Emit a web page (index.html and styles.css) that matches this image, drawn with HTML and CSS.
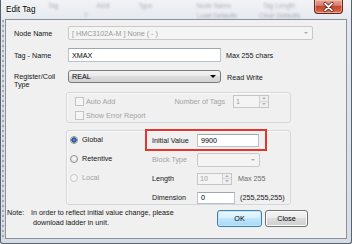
FILE: index.html
```html
<!DOCTYPE html>
<html>
<head>
<meta charset="utf-8">
<title>Edit Tag</title>
<link rel="stylesheet" href="styles.css">
</head>
<body>
<div class="window">
  <div class="backdrop">
    <div class="bd-row">
      <span class="bd b1">Tag</span><span class="bd b2">Addr</span><span class="bd b3">Type</span><span class="bd b4">Node Name</span><span class="bd b5">Tag Length</span>
    </div>
    <div class="bd-row">
      <span class="bd b6">T</span><span class="bd b7">Load Defaults</span><span class="bd b8">Clear Defaults</span>
    </div>
  </div>
  <div class="titlebar">
    <span class="title">Edit Tag</span>
    <div class="close-btn">
      <svg width="28" height="14" viewBox="0 0 28 14">
        <path d="M10.5 3.5 L17.5 10.5 M17.5 3.5 L10.5 10.5" stroke="#5a1d14" stroke-width="3.6" stroke-linecap="round" fill="none"/>
        <path d="M10.5 3.5 L17.5 10.5 M17.5 3.5 L10.5 10.5" stroke="#ffffff" stroke-width="2" stroke-linecap="round" fill="none"/>
      </svg>
    </div>
  </div>
  <div class="client">
    <div class="form">
      <div class="lbl">Node Name</div>
      <div class="combo disabled node"><span class="ctext">[ HMC3102A-M ] None ( - )</span><span class="arrow small gray"></span></div>
      <div class="lbl">Tag - Name</div>
      <div class="ctl-row"><div class="textbox tagname">XMAX</div><span class="side">Max 255 chars</span></div>
      <div class="lbl two">Register/Coil<br>Type</div>
      <div class="ctl-row top"><div class="combo list regtype"><span class="ctext">REAL</span><span class="arrow"></span></div><span class="side rw">Read Write</span></div>
    </div>

    <div class="group g1">
      <div class="g1-row">
        <span class="chk"></span><span class="dis">Auto Add</span>
        <span class="dis numtags">Number of Tags</span>
        <div class="spin ntags"><span class="spin-text">1</span><span class="spin-btns"><span class="sb up"></span><span class="sb down"></span></span></div>
      </div>
      <div class="g1-row">
        <span class="chk"></span><span class="dis">Show Error Report</span>
      </div>
    </div>

    <div class="group g2">
      <div class="radios">
        <div class="r-row"><span class="radio on"></span><span>Global</span></div>
        <div class="r-row"><span class="radio"></span><span>Retentive</span></div>
        <div class="r-row"><span class="radio off"></span><span class="dis">Local</span></div>
      </div>
      <div class="fields">
        <div class="f-row ivrow"><span class="flbl">Initial Value</span><div class="textbox iv">9900</div></div>
        <div class="f-row"><span class="flbl dis">Block Type</span><div class="combo disabled btype"><span class="ctext"></span><span class="arrow small gray"></span></div></div>
        <div class="f-row"><span class="flbl">Length</span><div class="spin len"><span class="spin-text">10</span><span class="spin-btns"><span class="sb up"></span><span class="sb down"></span></span></div><span class="side gray">Max 255</span></div>
        <div class="f-row"><span class="flbl">Dimension</span><div class="textbox dim">0</div><span class="side">(255,255,255)</span></div>
      </div>
    </div>

    <div class="bottom">
      <div class="note">
        <span class="note-h">Note:</span>
        <div class="note-t"><div>In order to reflect initial value change, please</div><div class="l2">download ladder in unit.</div></div>
      </div>
      <div class="buttons">
        <div class="btn default">OK</div>
        <div class="btn">Close</div>
      </div>
    </div>
  </div>
</div>
</body>
</html>
```
FILE: styles.css
```css
* { box-sizing: border-box; }
html, body { margin: 0; padding: 0; }
body {
  width: 352px;
  height: 244px;
  overflow: hidden;
  background: #d9dee4;
  font-family: "Liberation Sans", Arial, sans-serif;
  font-size: 7.2px;
  color: #141414;
}

.window {
  position: relative;
  width: 352px;
  height: 244px;
  background:
    repeating-linear-gradient(to bottom, #a3a9b1 0 2px, #d6dbe1 2px 5px) 1px 20px / 2px 220px no-repeat,
    linear-gradient(#f1f3f6, #e4e8ed 22px, #d8dde3);
  border: 1px solid #59636f;
  border-top: none;
  border-radius: 0 0 3px 3px;
  padding: 0 5px 5px 5px;
  display: flex;
  flex-direction: column;
}

/* blurred glass backdrop */
.backdrop {
  position: absolute;
  top: 0;
  left: 0;
  right: 0;
  height: 20px;
}
.bd-row { display: flex; height: 10px; align-items: center; }
.bd {
  display: block;
  white-space: nowrap;
  font-size: 6.5px;
  color: #5d636b;
  opacity: 0.45;
  filter: blur(1.3px);
}
.b1 { margin-left: 47px; }
.b2 { margin-left: 38px; }
.b3 { margin-left: 28px; }
.b4 { margin-left: 44px; }
.b5 { margin-left: 32px; }
.b6 { margin-left: 83px; }
.b7 { margin-left: 109px; }
.b8 { margin-left: 22px; }

.titlebar {
  position: relative;
  height: 20px;
  margin: 0 -5px;
  padding-left: 5px;
  display: flex;
  align-items: flex-start;
  justify-content: space-between;
}
.title {
  margin-top: 5px;
  font-size: 8.2px;
  color: #000;
  text-shadow: 0 0 3px #fff, 0 0 2px #fff;
}
.close-btn {
  width: 29px;
  height: 14px;
  margin-right: 8px;
  border: 1px solid #6b2418;
  border-top: none;
  border-radius: 0 0 4px 4px;
  background: linear-gradient(#e7a394 0%, #d9826f 40%, #c6472f 50%, #cf5b43 80%, #de8a6c 100%);
  box-shadow: inset 0 0 0 1px rgba(255,220,210,0.45);
  display: flex;
  align-items: center;
  justify-content: center;
}
.close-btn svg { display: block; }

.client {
  position: relative;
  flex: 1;
  background: #f0f0f0;
  box-shadow: 0 0 0 1px #8791a0;
}

/* top form */
.form {
  display: grid;
  grid-template-columns: 54px auto;
  grid-auto-rows: 14px;
  row-gap: 8px;
  padding: 6px 0 0 8px;
  align-items: center;
}
.lbl { color: #141414; white-space: nowrap; }
.lbl.two { align-self: start; padding-top: 3px; line-height: 8px; }
.ctl-row { display: flex; align-items: center; height: 14px; }
.ctl-row.top { align-items: flex-start; }
.side { margin-left: 5px; white-space: nowrap; color: #141414; }
.side.rw { margin-left: 6px; margin-top: 3px; }
.side.gray { color: #6a6a6a; }

.textbox {
  height: 14px;
  background: #fff;
  border: 1px solid #b9c1cb;
  border-top-color: #9ea6b0;
  padding-left: 3px;
  display: flex;
  align-items: center;
  color: #000;
}
.tagname { width: 153px; }

.combo {
  height: 14px;
  display: flex;
  align-items: center;
  justify-content: space-between;
  padding: 0 4px 0 3px;
  border-radius: 2px;
}
.combo.disabled {
  background: #f4f4f4;
  border: 1px solid #c9c9c9;
  color: #9a9a9a;
}
.combo.list {
  height: 13px;
  background: linear-gradient(#f4f4f4 0%, #ebebeb 45%, #dddddd 50%, #d2d2d2 100%);
  border: 1px solid #7b7b7b;
  border-radius: 3px;
  color: #000;
  padding-right: 4px;
}
.node { width: 245px; }
.regtype { width: 153px; }
.arrow {
  width: 0;
  height: 0;
  border-left: 3px solid transparent;
  border-right: 3px solid transparent;
  border-top: 3px solid #000;
}
.arrow.small { border-left-width: 2px; border-right-width: 2px; border-top-width: 2px; }
.arrow.gray { border-top-color: #a8a8a8; }

/* group boxes */
.group {
  width: 225px;
  margin-left: 60px;
  border: 1px solid #d3d8dd;
  border-radius: 3px;
  box-shadow: inset 1px 1px 0 #fbfbfb;
}
.g1 {
  margin-top: 8px;
  height: 31px;
  padding: 1px 21px 0 8px;
}
.g1-row { display: flex; align-items: center; height: 14px; }
.chk {
  width: 9px;
  height: 9px;
  border: 1px solid #c4c4c4;
  background: #f5f5f5;
  margin-right: 2px;
  flex: none;
}
.dis { color: #a3a3a3; white-space: nowrap; }
.numtags { margin-left: auto; margin-right: 8px; }

.spin {
  height: 13px;
  display: flex;
  border: 1px solid #c6c6c6;
  background: #f4f4f4;
  color: #a0a0a0;
}
.spin-text { flex: 1; padding-left: 2px; display: flex; align-items: center; }
.spin-btns {
  width: 9px;
  display: flex;
  flex-direction: column;
  border-left: 1px solid #d0d0d0;
}
.sb {
  flex: 1;
  display: flex;
  align-items: center;
  justify-content: center;
  background: #efefef;
}
.sb.up { border-bottom: 1px solid #d6d6d6; }
.sb::after {
  content: "";
  width: 0;
  height: 0;
  border-left: 2px solid transparent;
  border-right: 2px solid transparent;
}
.sb.up::after { border-bottom: 2px solid #b0b0b0; }
.sb.down::after { border-top: 2px solid #b0b0b0; }
.ntags { width: 36px; }
.len { width: 35px; height: 12px; }

.g2 {
  margin-top: 7px;
  height: 75px;
  display: flex;
}
.radios {
  width: 85px;
  padding: 2px 0 0 3px;
  display: flex;
  flex-direction: column;
  gap: 6px;
}
.r-row { display: flex; align-items: center; height: 13px; white-space: nowrap; }
.radio {
  width: 8px;
  height: 8px;
  border-radius: 50%;
  border: 1px solid #8d9194;
  background: radial-gradient(circle at 50% 40%, #ffffff 0, #e4e4e4 60%, #cfcfcf 100%);
  margin-right: 4px;
  flex: none;
}
.radio.on {
  background: radial-gradient(circle at 50% 50%, #7fb4ec 0, #2e63b3 1.4px, #173f80 2.4px, #e9e9e9 2.9px, #d2d2d2 100%);
}
.radio.off {
  border-color: #c8c8c8;
  background: #f5f5f5;
}

.fields {
  padding-top: 3px;
  display: flex;
  flex-direction: column;
  gap: 6px;
}
.f-row { display: flex; align-items: center; height: 13px; }
.flbl { width: 45px; white-space: nowrap; }
.ivrow { position: relative; width: 107px; }
.ivrow::after {
  content: "";
  position: absolute;
  top: -5px;
  bottom: -4px;
  left: -7px;
  right: -8px;
  border: 2px solid #e3352e;
}
.iv { width: 62px; height: 13px; }
.btype { width: 63px; }
.dim { width: 38px; height: 12px; }
.f-row .side { margin-left: 6px; }
.dim + .side { margin-left: 5px; }

/* bottom */
.bottom {
  display: flex;
  margin-top: 3px;
  padding-left: 1px;
}
.note {
  width: 210px;
  display: flex;
  line-height: 10px;
}
.note-h { width: 24px; }
.note-t .l2 { padding-left: 2px; }
.buttons {
  display: flex;
  gap: 3px;
  margin-top: 2px;
}
.btn {
  width: 43px;
  height: 17px;
  border: 1px solid #707070;
  border-radius: 3px;
  background: linear-gradient(#f3f3f3 0%, #ebebeb 45%, #dddddd 50%, #cfcfcf 100%);
  box-shadow: inset 0 0 0 1px #fcfcfc;
  display: flex;
  align-items: center;
  justify-content: center;
  color: #000;
}
.btn.default {
  width: 45px;
  border-color: #3c7fb1;
  background: linear-gradient(#eaf6fd 0%, #d9f0fc 45%, #bee6fd 50%, #a7d9f5 100%);
  box-shadow: inset 0 0 0 1px #c6e6f8;
}
```
